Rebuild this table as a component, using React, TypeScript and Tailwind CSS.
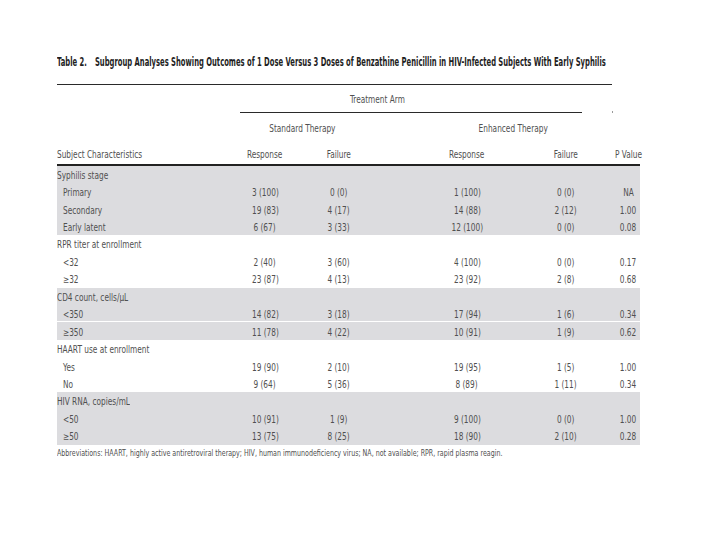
const FONT = '"Liberation Sans Narrow", "DejaVu Sans Condensed", "Liberation Sans", Arial, sans-serif';

type Group = {
  label: string;
  shaded: boolean;
  rows: { name: string; cells: string[]; splitAfter?: boolean }[];
};

const groups: Group[] = [
  {
    label: 'Syphilis stage',
    shaded: true,
    rows: [
      { name: 'Primary', cells: ['3 (100)', '0 (0)', '1 (100)', '0 (0)', 'NA'] },
      { name: 'Secondary', cells: ['19 (83)', '4 (17)', '14 (88)', '2 (12)', '1.00'] },
      { name: 'Early latent', cells: ['6 (67)', '3 (33)', '12 (100)', '0 (0)', '0.08'] },
    ],
  },
  {
    label: 'RPR titer at enrollment',
    shaded: false,
    rows: [
      { name: '<32', cells: ['2 (40)', '3 (60)', '4 (100)', '0 (0)', '0.17'] },
      { name: '≥32', cells: ['23 (87)', '4 (13)', '23 (92)', '2 (8)', '0.68'] },
    ],
  },
  {
    label: 'CD4 count, cells/μL',
    shaded: true,
    rows: [
      { name: '<350', cells: ['14 (82)', '3 (18)', '17 (94)', '1 (6)', '0.34'], splitAfter: true },
      { name: '≥350', cells: ['11 (78)', '4 (22)', '10 (91)', '1 (9)', '0.62'] },
    ],
  },
  {
    label: 'HAART use at enrollment',
    shaded: false,
    rows: [
      { name: 'Yes', cells: ['19 (90)', '2 (10)', '19 (95)', '1 (5)', '1.00'] },
      { name: 'No', cells: ['9 (64)', '5 (36)', '8 (89)', '1 (11)', '0.34'] },
    ],
  },
  {
    label: 'HIV RNA, copies/mL',
    shaded: true,
    rows: [
      { name: '<50', cells: ['10 (91)', '1 (9)', '9 (100)', '0 (0)', '1.00'] },
      { name: '≥50', cells: ['13 (75)', '8 (25)', '18 (90)', '2 (10)', '0.28'] },
    ],
  },
];

// narrow text: the source face is a condensed grotesque
const T = ({ children, left }: { children: React.ReactNode; left?: boolean }) => (
  <span className={`inline-block whitespace-nowrap scale-x-[0.82] ${left ? 'origin-left' : 'origin-center'}`}>
    {children}
  </span>
);

// column widths: label | response | failure | gap | response | gap | failure | p value
const Cells = ({ label, cells, indent }: { label: string; cells: string[]; indent?: boolean }) => (
  <>
    <div className={`w-[173px] ${indent ? 'pl-[6px]' : ''}`}>
      <T left>{label}</T>
    </div>
    <div className="w-[70px] flex justify-center">{cells[0] && <T>{cells[0]}</T>}</div>
    <div className="w-[78px] flex justify-center">{cells[1] && <T>{cells[1]}</T>}</div>
    <div className="w-[52px]" />
    <div className="w-[74px] flex justify-center">{cells[2] && <T>{cells[2]}</T>}</div>
    <div className="w-[24px]" />
    <div className="w-[76px] flex justify-center">{cells[3] && <T>{cells[3]}</T>}</div>
    <div className="w-[36px] pl-[12px] flex justify-center">{cells[4] && <T>{cells[4]}</T>}</div>
  </>
);

export default function App() {
  return (
    <div
      className="w-[720px] h-[540px] overflow-hidden bg-white pl-[57px] pt-[55px] text-[#505050]"
      style={{ fontFamily: FONT }}
    >
      <div className="h-[14px] w-[663px]">
        <div className="w-[980px] origin-left scale-x-[0.582] leading-[14px] text-[13px] font-bold text-[#1e1e1e] whitespace-nowrap">
          Table 2.<span className="inline-block w-[14px]" />Subgroup Analyses Showing Outcomes of 1 Dose Versus 3 Doses of Benzathine Penicillin in HIV-Infected Subjects With Early Syphilis
        </div>
      </div>

      <div className="mt-[15px] w-[555px] h-px bg-[#2a2a2a]" />

      <div className="w-[583px] text-[10px] leading-none">
        <div className="h-[20px] flex items-end pl-[293px]">
          <T left>Treatment Arm</T>
        </div>
        <div className="mt-[6px] flex items-center">
          <div className="ml-[183px] w-[342px] h-px bg-[#2a2a2a]" />
          <div className="ml-[30px] w-px h-[2px] bg-[#9a9a9a]" />
        </div>
        <div className="mt-[11px] h-[10px] flex items-center">
          <div className="w-[201px]" />
          <div className="w-[88px] flex justify-center">
            <T>Standard Therapy</T>
          </div>
          <div className="w-[123px]" />
          <div className="w-[88px] flex justify-center">
            <T>Enhanced Therapy</T>
          </div>
        </div>
        <div className="mt-[16px] h-[10px] flex items-center">
          <Cells label="Subject Characteristics" cells={['Response', 'Failure', 'Response', 'Failure', 'P Value']} />
        </div>
        <div className="mt-[4px] h-[1.5px] bg-[#222]" />

        {groups.map((g) => (
          <div key={g.label} className={g.shaded ? 'bg-[#dcdcdf]' : 'bg-white'}>
            <div className="h-[17.45px] pt-[3px] flex items-center">
              <Cells label={g.label} cells={['', '', '', '', '']} />
            </div>
            {g.rows.map((r) => (
              <div key={r.name}>
                <div className="h-[17.45px] pt-[3px] flex items-center">
                  <Cells label={r.name} cells={r.cells} indent />
                </div>
                {r.splitAfter && <div className="h-px -mt-px bg-white" />}
              </div>
            ))}
          </div>
        ))}
      </div>

      <div className="mt-[3px] text-[9px] leading-[10px]">
        <span className="inline-block whitespace-nowrap origin-left scale-x-[0.78]">
          Abbreviations: HAART, highly active antiretroviral therapy; HIV, human immunodeficiency virus; NA, not available; RPR, rapid plasma reagin.
        </span>
      </div>
    </div>
  );
}
